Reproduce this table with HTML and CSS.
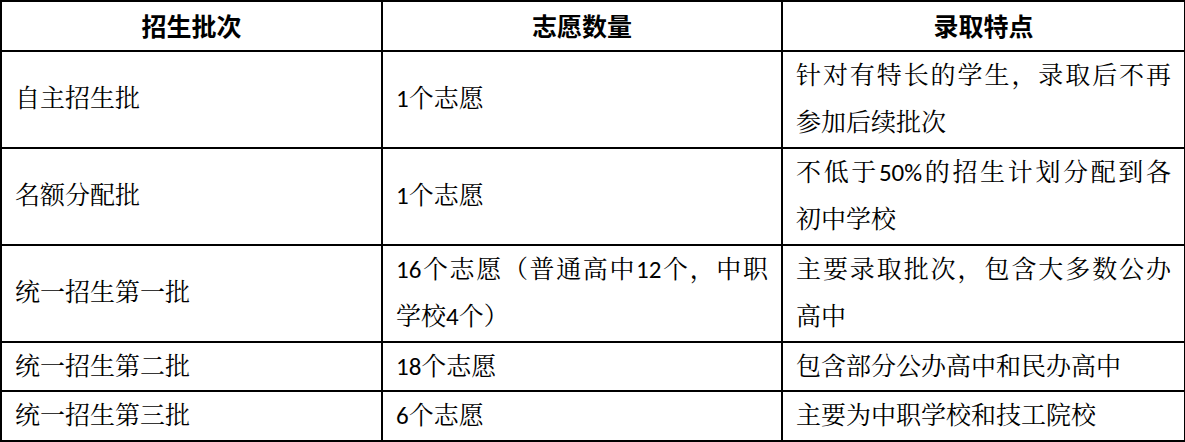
FILE: index.html
```html
<!DOCTYPE html>
<html lang="zh-CN">
<head>
<meta charset="utf-8">
<title>招生批次</title>
<link rel="stylesheet" href="styles.css">
</head>
<body>
<table class="admit">
  <colgroup>
    <col class="c1">
    <col class="c2">
    <col class="c3">
  </colgroup>
  <thead>
    <tr>
      <th>招生批次</th>
      <th>志愿数量</th>
      <th>录取特点</th>
    </tr>
  </thead>
  <tbody>
    <tr>
      <td>自主招生批</td>
      <td>1个志愿</td>
      <td><span class="ln full">针对有特长的学生，录取后不再</span><span class="ln">参加后续批次</span></td>
    </tr>
    <tr>
      <td>名额分配批</td>
      <td>1个志愿</td>
      <td><span class="ln full">不低于50%的招生计划分配到各</span><span class="ln">初中学校</span></td>
    </tr>
    <tr>
      <td>统一招生第一批</td>
      <td><span class="ln full">16个志愿（普通高中12个，中职</span><span class="ln">学校4个）</span></td>
      <td><span class="ln full">主要录取批次，包含大多数公办</span><span class="ln">高中</span></td>
    </tr>
    <tr>
      <td>统一招生第二批</td>
      <td>18个志愿</td>
      <td>包含部分公办高中和民办高中</td>
    </tr>
    <tr>
      <td>统一招生第三批</td>
      <td>6个志愿</td>
      <td>主要为中职学校和技工院校</td>
    </tr>
  </tbody>
</table>
</body>
</html>
```
FILE: styles.css
```css
html, body {
  margin: 0;
  padding: 0;
  background: #fff;
}

.admit {
  border-collapse: collapse;
  table-layout: fixed;
  width: 1184px;
  font-family: Carlito, Lato, "Noto Serif CJK SC", "Noto Sans CJK SC", sans-serif;
  font-size: 25px;
  color: #000;
}

.c1 { width: 381px; }
.c2 { width: 400px; }
.c3 { width: 403px; }

.admit th,
.admit td {
  border: 2px solid #000;
  padding: 0 13px;
  line-height: 47.5px;
  vertical-align: middle;
}

.admit th {
  font-family: "Noto Sans CJK SC", sans-serif;
  font-weight: 700;
  text-align: center;
}

.admit td {
  text-align: left;
}

.ln {
  display: block;
}

.full {
  text-align: justify;
  text-align-last: justify;
}
```
